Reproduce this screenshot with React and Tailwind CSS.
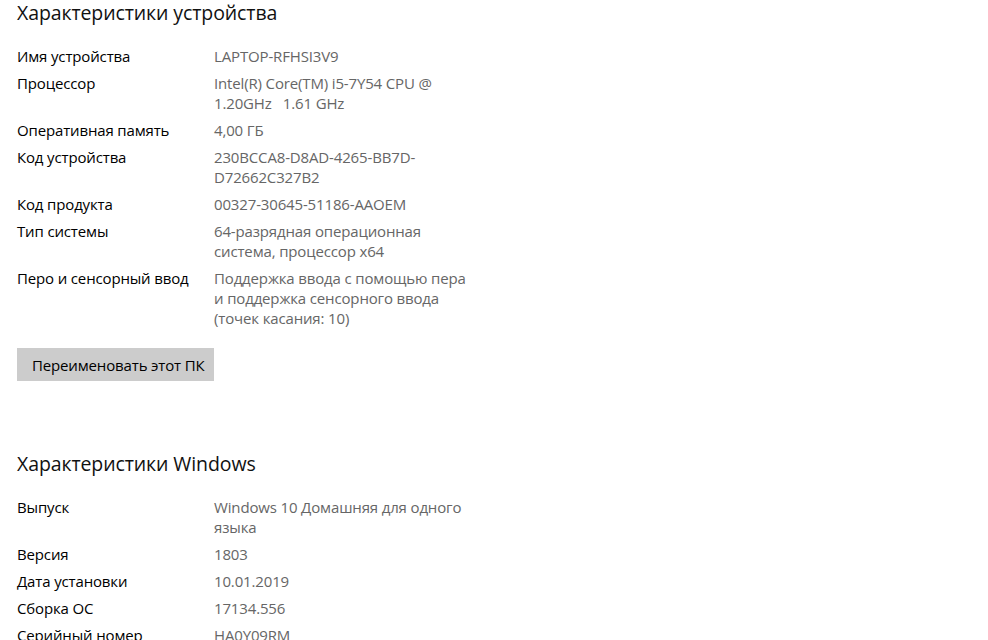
import React from 'react';

const device = [
    ['Имя устройства', ['LAPTOP-RFHSI3V9']],
    ['Процессор', ['Intel(R) Core(TM) i5-7Y54 CPU @', '1.20GHz   1.61 GHz']],
    ['Оперативная память', ['4,00 ГБ']],
    ['Код устройства', ['230BCCA8-D8AD-4265-BB7D-', 'D72662C327B2']],
    ['Код продукта', ['00327-30645-51186-AAOEM']],
    ['Тип системы', ['64-разрядная операционная', 'система, процессор x64']],
    ['Перо и сенсорный ввод', ['Поддержка ввода с помощью пера', 'и поддержка сенсорного ввода', '(точек касания: 10)']],
];

const windows = [
    ['Выпуск', ['Windows 10 Домашняя для одного', 'языка']],
    ['Версия', ['1803']],
    ['Дата установки', ['10.01.2019']],
    ['Сборка ОС', ['17134.556']],
    ['Серийный номер', ['HA0Y09RM']],
];

const Row = ({ label, lines }) => (
    <div className="flex mb-[7px] text-[15px] leading-[20px] tracking-[-0.15px]">
        <div className="w-[197px] shrink-0 text-black">{label}</div>
        <div className="text-[#666666] whitespace-pre">
            {lines.map((l, i) => <div key={i}>{l}</div>)}
        </div>
    </div>
);

const App = () => {
    return (
        <div className="w-[988px] h-[640px] overflow-hidden bg-white pl-[17px] font-['Segoe_UI','Open_Sans',sans-serif]">
            <h1 className="text-[19.5px] leading-[26px] text-[#111] mb-[20px] tracking-[-0.1px]">Характеристики устройства</h1>
            {device.map(([label, lines]) => <Row key={label} label={label} lines={lines} />)}
            <button className="block mt-[20px] w-[197px] h-[33px] bg-[#cccccc] text-[15px] leading-[20px] tracking-[-0.15px] text-black text-left px-[15px] whitespace-nowrap">
                Переименовать этот ПК
            </button>
            <h1 className="mt-[70px] text-[19.5px] leading-[26px] text-[#111] mb-[20px] tracking-[-0.1px]">Характеристики Windows</h1>
            {windows.map(([label, lines]) => <Row key={label} label={label} lines={lines} />)}
        </div>
    );
};

export default App;
